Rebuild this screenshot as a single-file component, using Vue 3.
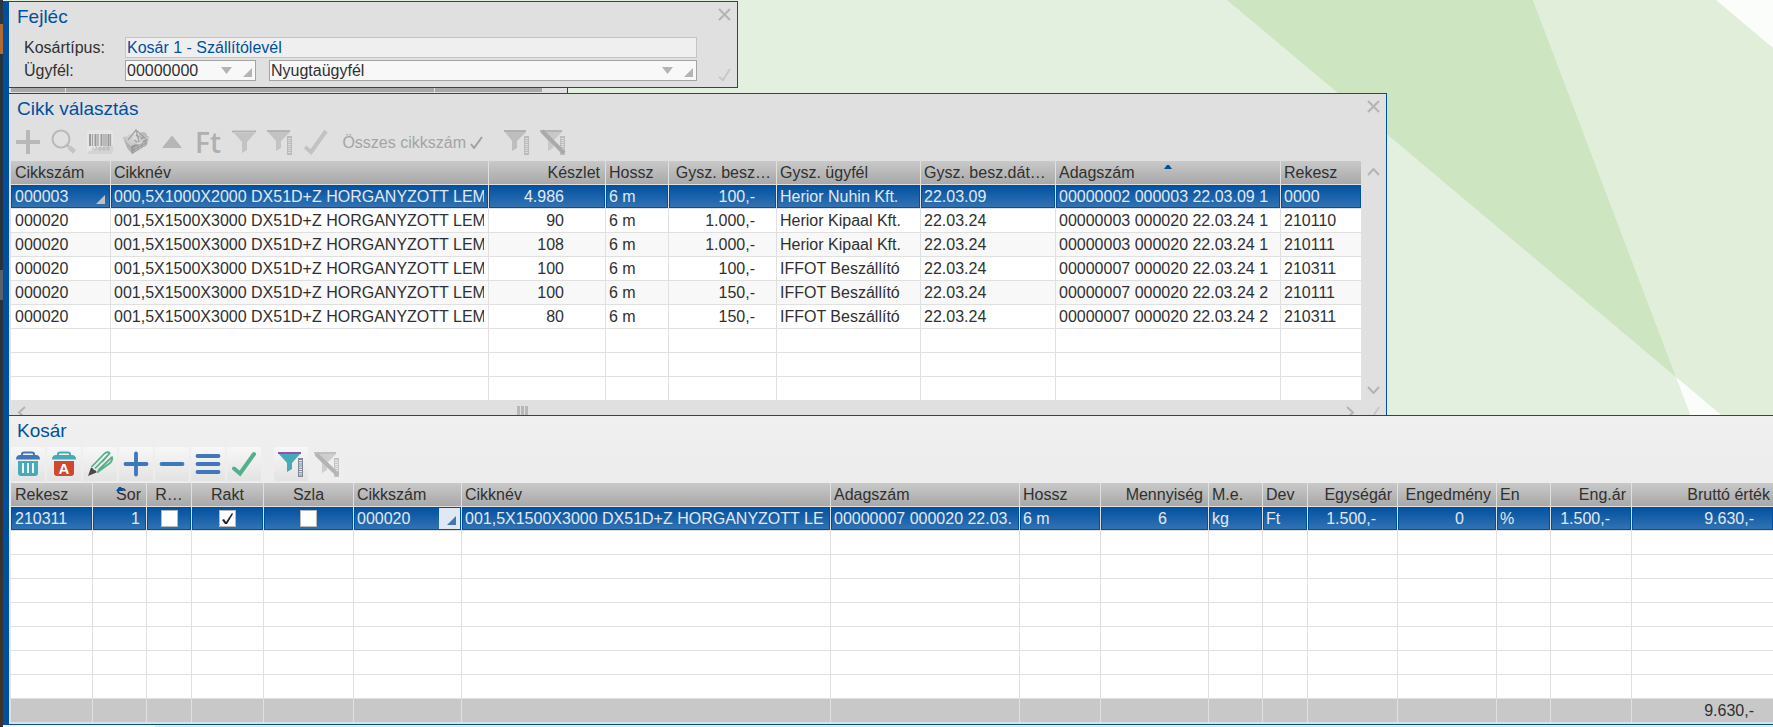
<script setup>
import { ref } from 'vue'

const basketType = ref('Kosár 1 - Szállítólevél')
const customerCode = ref('00000000')
const customerName = ref('Nyugtaügyfél')

const itemColumns = [
  { key: 'code', label: 'Cikkszám', width: 100, corner: true },
  { key: 'name', label: 'Cikknév' },
  { key: 'stock', label: 'Készlet', width: 117, align: 'right', pad: 'pad-wide' },
  { key: 'length', label: 'Hossz', width: 63 },
  { key: 'price', label: 'Gysz. besz…', width: 108, align: 'right', pad: 'pad-money' },
  { key: 'customer', label: 'Gysz. ügyfél', width: 144 },
  { key: 'date', label: 'Gysz. besz.dát…', width: 135 },
  { key: 'batch', label: 'Adagszám', width: 225, sorted: true },
  { key: 'bin', label: 'Rekesz', width: 80 },
]
const sheet = '001,5X1500X3000 DX51D+Z HORGANYZOTT LEM'
const itemRows = [
  { code: '000003', name: '000,5X1000X2000 DX51D+Z HORGANYZOTT LEM', stock: '4.986', length: '6 m', price: '100,-', customer: 'Herior Nuhin Kft.', date: '22.03.09', batch: '00000002 000003 22.03.09 1', bin: '0000' },
  { code: '000020', name: sheet, stock: '90', length: '6 m', price: '1.000,-', customer: 'Herior Kipaal Kft.', date: '22.03.24', batch: '00000003 000020 22.03.24 1', bin: '210110' },
  { code: '000020', name: sheet, stock: '108', length: '6 m', price: '1.000,-', customer: 'Herior Kipaal Kft.', date: '22.03.24', batch: '00000003 000020 22.03.24 1', bin: '210111' },
  { code: '000020', name: sheet, stock: '100', length: '6 m', price: '100,-', customer: 'IFFOT Beszállító', date: '22.03.24', batch: '00000007 000020 22.03.24 1', bin: '210311' },
  { code: '000020', name: sheet, stock: '100', length: '6 m', price: '150,-', customer: 'IFFOT Beszállító', date: '22.03.24', batch: '00000007 000020 22.03.24 2', bin: '210111' },
  { code: '000020', name: sheet, stock: '80', length: '6 m', price: '150,-', customer: 'IFFOT Beszállító', date: '22.03.24', batch: '00000007 000020 22.03.24 2', bin: '210311' },
  {}, {}, {},
]

const cartColumns = [
  { key: 'bin', label: 'Rekesz', width: 82 },
  { key: 'line', label: 'Sor', width: 54, align: 'right', pad: 'pad-edge', sorted: true },
  { key: 'reserved', label: 'R…', width: 45, align: 'center', check: true },
  { key: 'stocked', label: 'Rakt', width: 72, align: 'center', check: true },
  { key: 'invoiced', label: 'Szla', width: 90, align: 'center', check: true },
  { key: 'code', label: 'Cikkszám', width: 108, corner: true },
  { key: 'name', label: 'Cikknév' },
  { key: 'batch', label: 'Adagszám', width: 189 },
  { key: 'length', label: 'Hossz', width: 81 },
  { key: 'amount', label: 'Mennyiség', width: 108, align: 'right', pad: 'pad-wide' },
  { key: 'unit', label: 'M.e.', width: 54 },
  { key: 'currency', label: 'Dev', width: 45 },
  { key: 'price', label: 'Egységár', width: 90, align: 'right', pad: 'pad-money' },
  { key: 'discount', label: 'Engedmény', width: 99, align: 'right', pad: 'pad-mid' },
  { key: 'discountUnit', label: 'En', width: 54 },
  { key: 'netPrice', label: 'Eng.ár', width: 81, align: 'right', pad: 'pad-money' },
  { key: 'gross', label: 'Bruttó érték', width: 141, align: 'right', pad: 'pad-money' },
]
const cartRows = ref([
  { bin: '210311', line: '1', reserved: false, stocked: true, invoiced: false, code: '000020', name: '001,5X1500X3000 DX51D+Z HORGANYZOTT LE', batch: '00000007 000020 22.03.', length: '6 m', amount: '6', unit: 'kg', currency: 'Ft', price: '1.500,-', discount: '0', discountUnit: '%', netPrice: '1.500,-', gross: '9.630,-' },
  {}, {}, {}, {}, {}, {}, {},
])
const cartTotals = { gross: '9.630,-' }
</script>

<template>
  <div class="desktop">
    <svg class="wallpaper" viewBox="0 0 1773 727" preserveAspectRatio="xMaxYMin slice" aria-hidden="true">
      <rect width="1773" height="727" fill="#e4f0df" />
      <path d="M1227 0H1533L1676 377Z" fill="#cde5c1" />
      <path d="M1533 0H1716L1773 48V458L1676 377Z" fill="#e1eed9" />
      <path d="M1716 0H1773V48Z" fill="#fbfdfa" />
      <path d="M1676 377L1809 727H2093Z" fill="#fbfdfa" />
      <path d="M0 700H155V727H0Z" fill="#fbfdfa" />
    </svg>
    <div class="edge"></div>
    <div class="rail"></div>

    <main class="stack">
      <section class="panel head-panel">
        <header class="panel-title">
          <h2>Fejléc</h2>
          <button class="glyph" aria-label="Fejléc bezárása">
            <svg width="13" height="13" viewBox="0 0 13 13"><path d="M1 1L12 12M12 1L1 12" /></svg>
          </button>
        </header>
        <form class="head-form" @submit.prevent>
          <div class="fields">
            <label for="basket-type">Kosártípus:</label>
            <input id="basket-type" v-model="basketType" class="readonly" readonly />
            <label for="customer-code">Ügyfél:</label>
            <div class="combos">
              <div class="combo combo-code">
                <input id="customer-code" v-model="customerCode" />
                <button type="button" aria-label="Ügyfélkód lista"><svg width="11" height="7" viewBox="0 0 11 7"><path d="M0 0H11L5.5 7Z" /></svg></button>
                <button type="button" class="corner-btn" aria-label="Ügyfélkód megnyitása"><svg width="9" height="9" viewBox="0 0 9 9"><path d="M9 0V9H0Z" /></svg></button>
              </div>
              <div class="combo combo-name">
                <input v-model="customerName" aria-label="Ügyfél neve" />
                <button type="button" aria-label="Ügyfélnév lista"><svg width="11" height="7" viewBox="0 0 11 7"><path d="M0 0H11L5.5 7Z" /></svg></button>
                <button type="button" class="corner-btn" aria-label="Ügyfél megnyitása"><svg width="9" height="9" viewBox="0 0 9 9"><path d="M9 0V9H0Z" /></svg></button>
              </div>
            </div>
          </div>
          <button class="glyph faint" aria-label="Fejléc elfogadása">
            <svg width="13" height="13" viewBox="0 0 13 13"><path d="M1 9L5 12L12 1" /></svg>
          </button>
        </form>
      </section>

      <div class="peek"><i class="peek-a"></i><i class="peek-b"></i><i class="peek-c"></i></div>

      <section class="panel item-panel">
        <header class="panel-title">
          <h2>Cikk választás</h2>
          <button class="glyph" aria-label="Cikk választás bezárása">
            <svg width="13" height="13" viewBox="0 0 13 13"><path d="M1 1L12 12M12 1L1 12" /></svg>
          </button>
        </header>
        <div class="toolbar muted">
          <button aria-label="Hozzáadás"><svg viewBox="0 0 34 34"><path d="M5 17H29M17 5V29" stroke="#b8b8b8" stroke-width="4" /></svg></button>
          <button aria-label="Keresés">
            <svg viewBox="0 0 34 34"><circle cx="14" cy="14" r="8.5" fill="none" stroke="#b8b8b8" stroke-width="2" /><path d="M20 20L22 22" stroke="#b8b8b8" stroke-width="2" /><path d="M22 22L27.500 27" stroke="#c4c4c4" stroke-width="4.500" /></svg>
          </button>
          <button aria-label="Vonalkód">
            <svg viewBox="0 0 34 34">
              <rect x="4" y="5" width="26" height="24" rx="3" fill="#d4d4d4" />
              <path d="M4 8Q4 5 7 5H27Q30 5 30 8V20Q16 22 4 27Z" fill="#e6e6e6" />
              <path d="M7 9V21M12.500 9V21M18.500 9V21M25.500 9V21" stroke="#9a9a9a" stroke-width="2" />
              <path d="M9.500 9V21M15 9V21M21 9V21M23 9V21M27.500 9V21" stroke="#a4a4a4" stroke-width="1.300" />
              <path d="M10 22V25M12 22H14V24H12V25M16 22H18V25H16ZM20 22H22V25H20ZM24 22H26V25H24Z" stroke="#acacac" stroke-width=".7" fill="none" />
            </svg>
          </button>
          <button aria-label="Kosár">
            <svg viewBox="0 0 34 34">
              <path d="M4 12L8 23L13 29L28 20L30 11Z" fill="#b2b2b2" />
              <path d="M12 21L28 13L27 20L13 29Z" fill="#989898" />
              <circle cx="12" cy="14" r="5" fill="#cfcfcf" /><circle cx="19" cy="14" r="5.500" fill="#dadada" />
              <circle cx="24" cy="11" r="4" fill="#bcbcbc" />
              <path d="M5 12L12 20L30 12" fill="none" stroke="#c9c9c9" stroke-width="2" />
              <path d="M9 15L17 5L27 14M17 5L20 17" fill="none" stroke="#a4a4a4" stroke-width="1.300" />
              <path d="M14 24L28 16M14 27L27 19M17 21V26M21 19V24M25 17V22" stroke="#bcbcbc" stroke-width=".8" />
              <path d="M17 10L20 12M15 15L18 17M22 14L25 12" stroke="#999" stroke-width="1.300" />
            </svg>
          </button>
          <button aria-label="Fel"><svg viewBox="0 0 34 34"><path d="M7 23L16 11.500Q17 10.500 18 11.500L27 23Z" fill="#b6b6b6" /></svg></button>
          <button class="ft">Ft</button>
          <button aria-label="Szűrő">
            <svg viewBox="0 0 34 34"><path d="M7 8H28L20 17V25L15 28V17Z" fill="#c3c3c3" /><path d="M5 6.500H29" stroke="#b4b4b4" stroke-width="2" /></svg>
          </button>
          <button aria-label="Szűrő szerkesztése">
            <svg viewBox="0 0 34 34"><path d="M5 7H27L18 16V23L13 26V16Z" fill="#c3c3c3" /><path d="M4 6H27" stroke="#b4b4b4" stroke-width="2" /><path d="M26.500 11V30" stroke="#bababa" stroke-width="5" /><path d="M26.500 13V29" stroke="#dcdcdc" stroke-width="3" stroke-dasharray="1 1" /></svg>
          </button>
          <button aria-label="Elfogadás"><svg viewBox="0 0 34 34"><path d="M6 22L12 27L27 6" fill="none" stroke="#c2c2c2" stroke-width="4" /></svg></button>
          <button class="text-btn">Összes cikkszám<svg class="tick" viewBox="0 0 13 13"><path d="M1 8L4 12L12 1" fill="none" stroke="#a0a0a0" stroke-width="2" /></svg></button>
          <button class="apart" aria-label="Gyorsszűrő">
            <svg viewBox="0 0 34 34"><path d="M5 7H26L17 16V23L12 26V16Z" fill="#bebebe" /><path d="M4 6H26" stroke="#b0b0b0" stroke-width="2" /><path d="M26.500 11V30" stroke="#bababa" stroke-width="5" /><path d="M26.500 13V29" stroke="#dcdcdc" stroke-width="3" stroke-dasharray="1 1" /></svg>
          </button>
          <button aria-label="Szűrő törlése">
            <svg viewBox="0 0 34 34"><path d="M5 7H26L17 16V23L12 26V16Z" fill="#c8c8c8" /><path d="M4 6H26" stroke="#b4b4b4" stroke-width="2" /><path d="M26.500 11V30" stroke="#bcbcbc" stroke-width="5" /><path d="M26.500 13V24" stroke="#dcdcdc" stroke-width="3" stroke-dasharray="1 1" /><path d="M6 6L28 28" stroke="#aaa" stroke-width="4" /></svg>
          </button>
        </div>
        <div class="scroll-area">
          <table class="grid">
            <colgroup><col v-for="c in itemColumns" :key="c.key" :style="c.width ? { width: c.width + 'px' } : null" /></colgroup>
            <thead>
              <tr>
                <th v-for="c in itemColumns" :key="c.key" :class="c.align" scope="col">
                  <div>{{ c.label }}</div>
                  <svg v-if="c.sorted" class="sort" viewBox="0 0 8 4"><path d="M0 4L3 0H5L8 4Z" fill="#0050a0" /></svg>
                </th>
              </tr>
            </thead>
            <tbody>
              <tr v-for="(row, i) in itemRows" :key="i" :class="{ selected: i === 0, alt: row.code && i % 2 === 0 }">
                <td v-for="c in itemColumns" :key="c.key" :class="[c.align, c.pad]">
                  <div>{{ row[c.key] }}</div>
                  <svg v-if="c.corner && i === 0" class="cell-corner" viewBox="0 0 9 9"><path d="M9 0V9H0Z" fill="#c0c0c0" /></svg>
                </td>
              </tr>
            </tbody>
          </table>
          <div class="vscroll">
            <button class="glyph" aria-label="Görgetés fel"><svg width="13" height="8" viewBox="0 0 13 8"><path d="M1 7L6.500 1L12 7" /></svg></button>
            <button class="glyph" aria-label="Görgetés le"><svg width="13" height="8" viewBox="0 0 13 8"><path d="M1 1L6.500 7L12 1" /></svg></button>
          </div>
        </div>
        <div class="hscroll">
          <button class="glyph" aria-label="Görgetés balra"><svg width="8" height="13" viewBox="0 0 8 13"><path d="M7 1L1 6.500L7 12" /></svg></button>
          <div class="track"><span class="grip"></span></div>
          <button class="glyph" aria-label="Görgetés jobbra"><svg width="8" height="13" viewBox="0 0 8 13"><path d="M1 1L7 6.500L1 12" /></svg></button>
          <button class="glyph faint" aria-label="Választás elfogadása"><svg width="13" height="13" viewBox="0 0 13 13"><path d="M1 9L5 12L12 1" /></svg></button>
        </div>
      </section>

      <section class="panel cart-panel">
        <header class="panel-title"><h2>Kosár</h2></header>
        <div class="toolbar">
          <button aria-label="Törlés">
            <svg viewBox="0 0 34 34"><path d="M11 8V7Q11 5.500 13 5.500H21Q23 5.500 23 7V8" fill="none" stroke="#3f77b8" stroke-width="2" /><path d="M5 12.500Q5 8 9 8H25Q29 8 29 12.500Z" fill="#3f77b8" /><path d="M7 14H27V26Q27 29 24 29H10Q7 29 7 26Z" fill="#46abb6" /><path d="M12 16V26M17 16V26M22 16V26" stroke="#eef6f7" stroke-width="2" /></svg>
          </button>
          <button aria-label="Összes törlése">
            <svg viewBox="0 0 34 34"><path d="M11 8V7Q11 5.500 13 5.500H21Q23 5.500 23 7V8" fill="none" stroke="#46abb6" stroke-width="2" /><path d="M5 12.500Q5 8 9 8H25Q29 8 29 12.500Z" fill="#46abb6" /><path d="M7 14H27V26Q27 29 24 29H10Q7 29 7 26Z" fill="#d0482e" /><text x="17" y="27" class="icon-letter">A</text></svg>
          </button>
          <button aria-label="Szerkesztés">
            <svg viewBox="0 0 34 34"><path d="M8.500 20L21 7Q24 4 27 6M14 25.500L27 16Q30 13 29 9.500M12 21.500L25 8M15 23.500L29 10M27 6L19 15" fill="none" stroke="#56ae8a" stroke-width="1.800" /><path d="M5 29L8 20.500Q10.500 21 11 23Q13.500 23 13.500 25.500Z" fill="#484848" /></svg>
          </button>
          <button aria-label="Új tétel"><svg viewBox="0 0 34 34"><path d="M6.500 17H27.500M17 6.500V27.500" stroke="#3f77b8" stroke-width="3.800" stroke-linecap="round" /></svg></button>
          <button aria-label="Tétel elvétele"><svg viewBox="0 0 34 34"><path d="M6.500 17H27.500" stroke="#3f77b8" stroke-width="3.800" stroke-linecap="round" /></svg></button>
          <button aria-label="Menü"><svg viewBox="0 0 34 34"><path d="M6.500 9H27.500M6.500 17H27.500M6.500 25H27.500" stroke="#3f77b8" stroke-width="3.800" stroke-linecap="round" /></svg></button>
          <button aria-label="Kosár elfogadása"><svg viewBox="0 0 34 34"><path d="M7 21.500L13 26.500L27 7" fill="none" stroke="#56ae8a" stroke-width="4" stroke-linecap="round" /></svg></button>
          <button class="apart" aria-label="Kosár szűrése">
            <svg viewBox="0 0 34 34"><path d="M5 7H26L18 16V22L13 25V16Z" fill="#46abb6" /><path d="M4 6H27" stroke="#9250b0" stroke-width="2" /><path d="M26.500 11V30" stroke="#808898" stroke-width="5" /><path d="M26.500 13V29" stroke="#e4e8f4" stroke-width="3" stroke-dasharray="1.200 1" /></svg>
          </button>
          <button class="off" aria-label="Kosárszűrő törlése">
            <svg viewBox="0 0 34 34"><path d="M5 7H26L17 16V23L12 26V16Z" fill="#cecece" /><path d="M4 6H26" stroke="#c0c0c0" stroke-width="2" /><path d="M26.500 11V30" stroke="#c4c4c4" stroke-width="5" /><path d="M26.500 13V24" stroke="#ececec" stroke-width="3" stroke-dasharray="1 1" /><path d="M6 7L28 28" stroke="#b4b4b4" stroke-width="4" /></svg>
          </button>
        </div>
        <table class="grid">
          <colgroup><col v-for="c in cartColumns" :key="c.key" :style="c.width ? { width: c.width + 'px' } : null" /></colgroup>
          <thead>
            <tr>
              <th v-for="c in cartColumns" :key="c.key" :class="c.align" scope="col">
                <div>{{ c.label }}</div>
                <svg v-if="c.sorted" class="sort" viewBox="0 0 8 4"><path d="M0 4L3 0H5L8 4Z" fill="#0050a0" /></svg>
              </th>
            </tr>
          </thead>
          <tbody>
            <tr v-for="(row, i) in cartRows" :key="i" :class="{ selected: i === 0 }">
              <td v-for="c in cartColumns" :key="c.key" :class="[c.align, c.pad]">
                <input v-if="c.check && i === 0" v-model="row[c.key]" type="checkbox" :aria-label="c.label" />
                <div v-else>{{ row[c.key] }}</div>
                <button v-if="c.corner && i === 0" class="open-cell" aria-label="Cikk megnyitása"><svg width="9" height="9" viewBox="0 0 9 9"><path d="M9 0V9H0Z" fill="#3f77b8" /></svg></button>
              </td>
            </tr>
          </tbody>
          <tfoot>
            <tr><td v-for="c in cartColumns" :key="c.key" :class="[c.align, c.pad]"><div>{{ cartTotals[c.key] }}</div></td></tr>
          </tfoot>
        </table>
      </section>
    </main>
  </div>
</template>

<style>
body {
  margin: 0;
}
</style>

<style scoped>
* {
  box-sizing: border-box;
}
.desktop {
  position: relative;
  display: flex;
  min-height: 100vh;
  overflow: hidden;
  font: 16px/23px "Liberation Sans", Arial, sans-serif;
  color: #303030;
}
.wallpaper {
  position: absolute;
  inset: 0;
  width: 100%;
  height: 100%;
}
.edge {
  position: relative;
  flex: none;
  width: 3px;
  background: linear-gradient(#2c3844 24px, #b06c34 24px, #b06c34 54px, #28323c 54px, #28323c 270px, #58606a 270px, #58606a 300px, #28323c 300px, #3c342a 660px);
}
.rail {
  position: relative;
  flex: none;
  width: 6px;
  margin: 1px 0 2px;
  background: #0050a0;
}
.stack {
  position: relative;
  flex: 1;
  min-width: 0;
  padding: 1px 0 2px;
}
button {
  display: flex;
  align-items: center;
  justify-content: center;
  padding: 0;
  border: 0;
  background: none;
  font: inherit;
  color: inherit;
}
.panel {
  border: 1px solid #0050a0;
  border-left: 0;
  background: #e0e0e0;
}
.head-panel {
  max-width: 729px;
}
.item-panel {
  max-width: 1378px;
  border-bottom: 0;
}
.cart-panel {
  padding-bottom: 1px;
  border-right: 0;
  background: linear-gradient(#f0f0f0, #e0e0e0);
}
.cart-panel .grid {
  margin-left: 2px;
  width: calc(100% - 2px);
}
.panel-title {
  display: flex;
  justify-content: space-between;
  align-items: flex-start;
  padding: 3px 6px 0 8px;
}
h2 {
  margin: 0;
  font-size: 19px;
  line-height: 24px;
  font-weight: 400;
  color: #0050a0;
}
.panel-title .glyph {
  margin-top: 3px;
}
.glyph svg {
  display: block;
  fill: none;
  stroke: #b4b4b4;
  stroke-width: 2;
}
.faint svg {
  stroke: #c8c8c8;
}
.head-form {
  display: flex;
  justify-content: space-between;
  align-items: flex-end;
  padding: 8px 6px 6px 15px;
}
.fields {
  flex: 1;
  display: grid;
  grid-template-columns: 101px 1fr;
  row-gap: 2px;
  margin-right: 21px;
  line-height: 21px;
}
.fields input {
  min-width: 0;
  height: 21px;
  padding: 0 1px;
  border: 1px solid #c4c4c4;
  font: inherit;
  color: #303030;
}
.fields .readonly {
  background: #efefef;
  color: #0050a0;
}
.combos {
  display: flex;
  gap: 13px;
}
.combo {
  display: flex;
  height: 21px;
  border: 1px solid #a4a4a4;
  background: #f8f8f8;
}
.combo-code {
  width: 131px;
}
.combo-name {
  flex: 1;
}
.combo input {
  flex: 1;
  height: 19px;
  border: 0;
  background: none;
}
.combo button {
  width: 18px;
  fill: #b4b4b4;
}
.combo .corner-btn {
  align-items: flex-end;
  justify-content: flex-end;
  width: 20px;
  padding: 0 3px 3px 0;
}
.peek {
  display: flex;
  gap: 1px;
  max-width: 559px;
  height: 5px;
  padding: 0 0 1px 2px;
  border-right: 1px solid #0050a0;
  background: #e0e0e0;
}
.peek i {
  background: #a8a8a8;
}
.peek-a {
  width: 54px;
}
.peek-b {
  width: 368px;
}
.peek-c {
  width: 107px;
}
.toolbar {
  display: flex;
  gap: 2px;
  padding: 4px 2px 2px;
}
.toolbar button {
  width: 34px;
  height: 34px;
  background: linear-gradient(#f7f7f7, #e3e3e3);
}
.toolbar button > svg {
  width: 34px;
  height: 34px;
}
.toolbar.muted button {
  background: none;
}
.toolbar .off {
  background: #eee;
}
.toolbar .apart {
  margin-left: 11px;
}
.toolbar .text-btn {
  width: 152px;
  gap: 4px;
  justify-content: flex-end;
  padding-right: 4px;
  color: #a4a4a4;
}
.toolbar .text-btn > .tick {
  width: 13px;
  height: 13px;
}
.toolbar .ft {
  font: 600 28px/34px "Open Sans", sans-serif;
  color: #b0b0b0;
}
.icon-letter {
  font: bold 15px "Liberation Sans", Arial, sans-serif;
  text-anchor: middle;
  fill: #fff;
}
.grid {
  table-layout: fixed;
  border-collapse: separate;
  border-spacing: 0;
  width: 100%;
}
.grid th,
.grid td {
  position: relative;
  height: 24px;
  padding: 0 4px 0 3px;
  border: solid #e0e0e0;
  border-width: 0 1px 1px 0;
  background: #fff;
  font-weight: 400;
  text-align: left;
}
.grid th:first-child,
.grid td:first-child {
  padding-left: 4px;
}
.grid th:last-child,
.grid td:last-child {
  border-right: 0;
}
.grid th {
  background: linear-gradient(#c9c9c9, #a8a8a8);
}
.grid th > div,
.grid td > div {
  height: 23px;
  overflow: hidden;
  white-space: nowrap;
}
.grid .right {
  padding-right: 5px;
  text-align: right;
}
.grid .center {
  padding: 0;
  text-align: center;
}
.grid .pad-edge {
  padding-right: 6px;
}
.grid .pad-money {
  padding-right: 21px;
}
.grid .pad-mid {
  padding-right: 32px;
}
.grid .pad-wide {
  padding-right: 41px;
}
.cart-panel .grid th:last-child {
  padding-right: 3px;
}
.cart-panel .grid td:last-child {
  padding-right: 19px;
}
.grid .alt td {
  background: #f8f8f8;
}
.grid .selected td {
  background: linear-gradient(#0050a0, #3474b4);
  box-shadow: inset 0 0 0 1px #0050a0;
  color: #e4e8f0;
}
.grid tfoot td {
  background: #c8c8c8;
}
.sort {
  position: absolute;
  top: 4px;
  left: calc(50% - 4px);
  width: 8px;
  height: 4px;
}
.cell-corner {
  position: absolute;
  right: 5px;
  bottom: 4px;
  width: 9px;
  height: 9px;
}
.open-cell {
  position: absolute;
  top: 1px;
  right: 1px;
  width: 21px;
  height: 21px;
  align-items: flex-end;
  justify-content: flex-end;
  padding: 4px;
  background: #e0e8f4;
}
.grid input {
  display: block;
  appearance: none;
  width: 17px;
  height: 17px;
  margin: 0 auto;
  border: 1px solid #b8b8b8;
  background: #fff;
}
.grid input:checked::before {
  content: "";
  display: block;
  width: 15px;
  height: 15px;
  background: #202020;
  clip-path: polygon(2px 9px, 4px 8px, 6px 11px, 12px 2px, 13px 3px, 7px 13px, 5px 13px);
}
.scroll-area {
  display: flex;
  padding-left: 2px;
}
.scroll-area .grid {
  flex: 1;
  min-width: 0;
}
.vscroll {
  display: flex;
  flex-direction: column;
  justify-content: space-between;
  padding: 7px 6px;
}
.hscroll {
  display: flex;
  align-items: flex-start;
  height: 14px;
  padding: 5px 6px 0 9px;
  overflow: hidden;
}
.track {
  flex: 1;
  display: flex;
  justify-content: center;
  padding-right: 328px;
}
.hscroll .faint {
  margin-left: 13px;
}
.grip {
  width: 11px;
  height: 13px;
  background: repeating-linear-gradient(90deg, #b8b8b8 0, #b8b8b8 3px, transparent 3px, transparent 4px);
}
</style>
